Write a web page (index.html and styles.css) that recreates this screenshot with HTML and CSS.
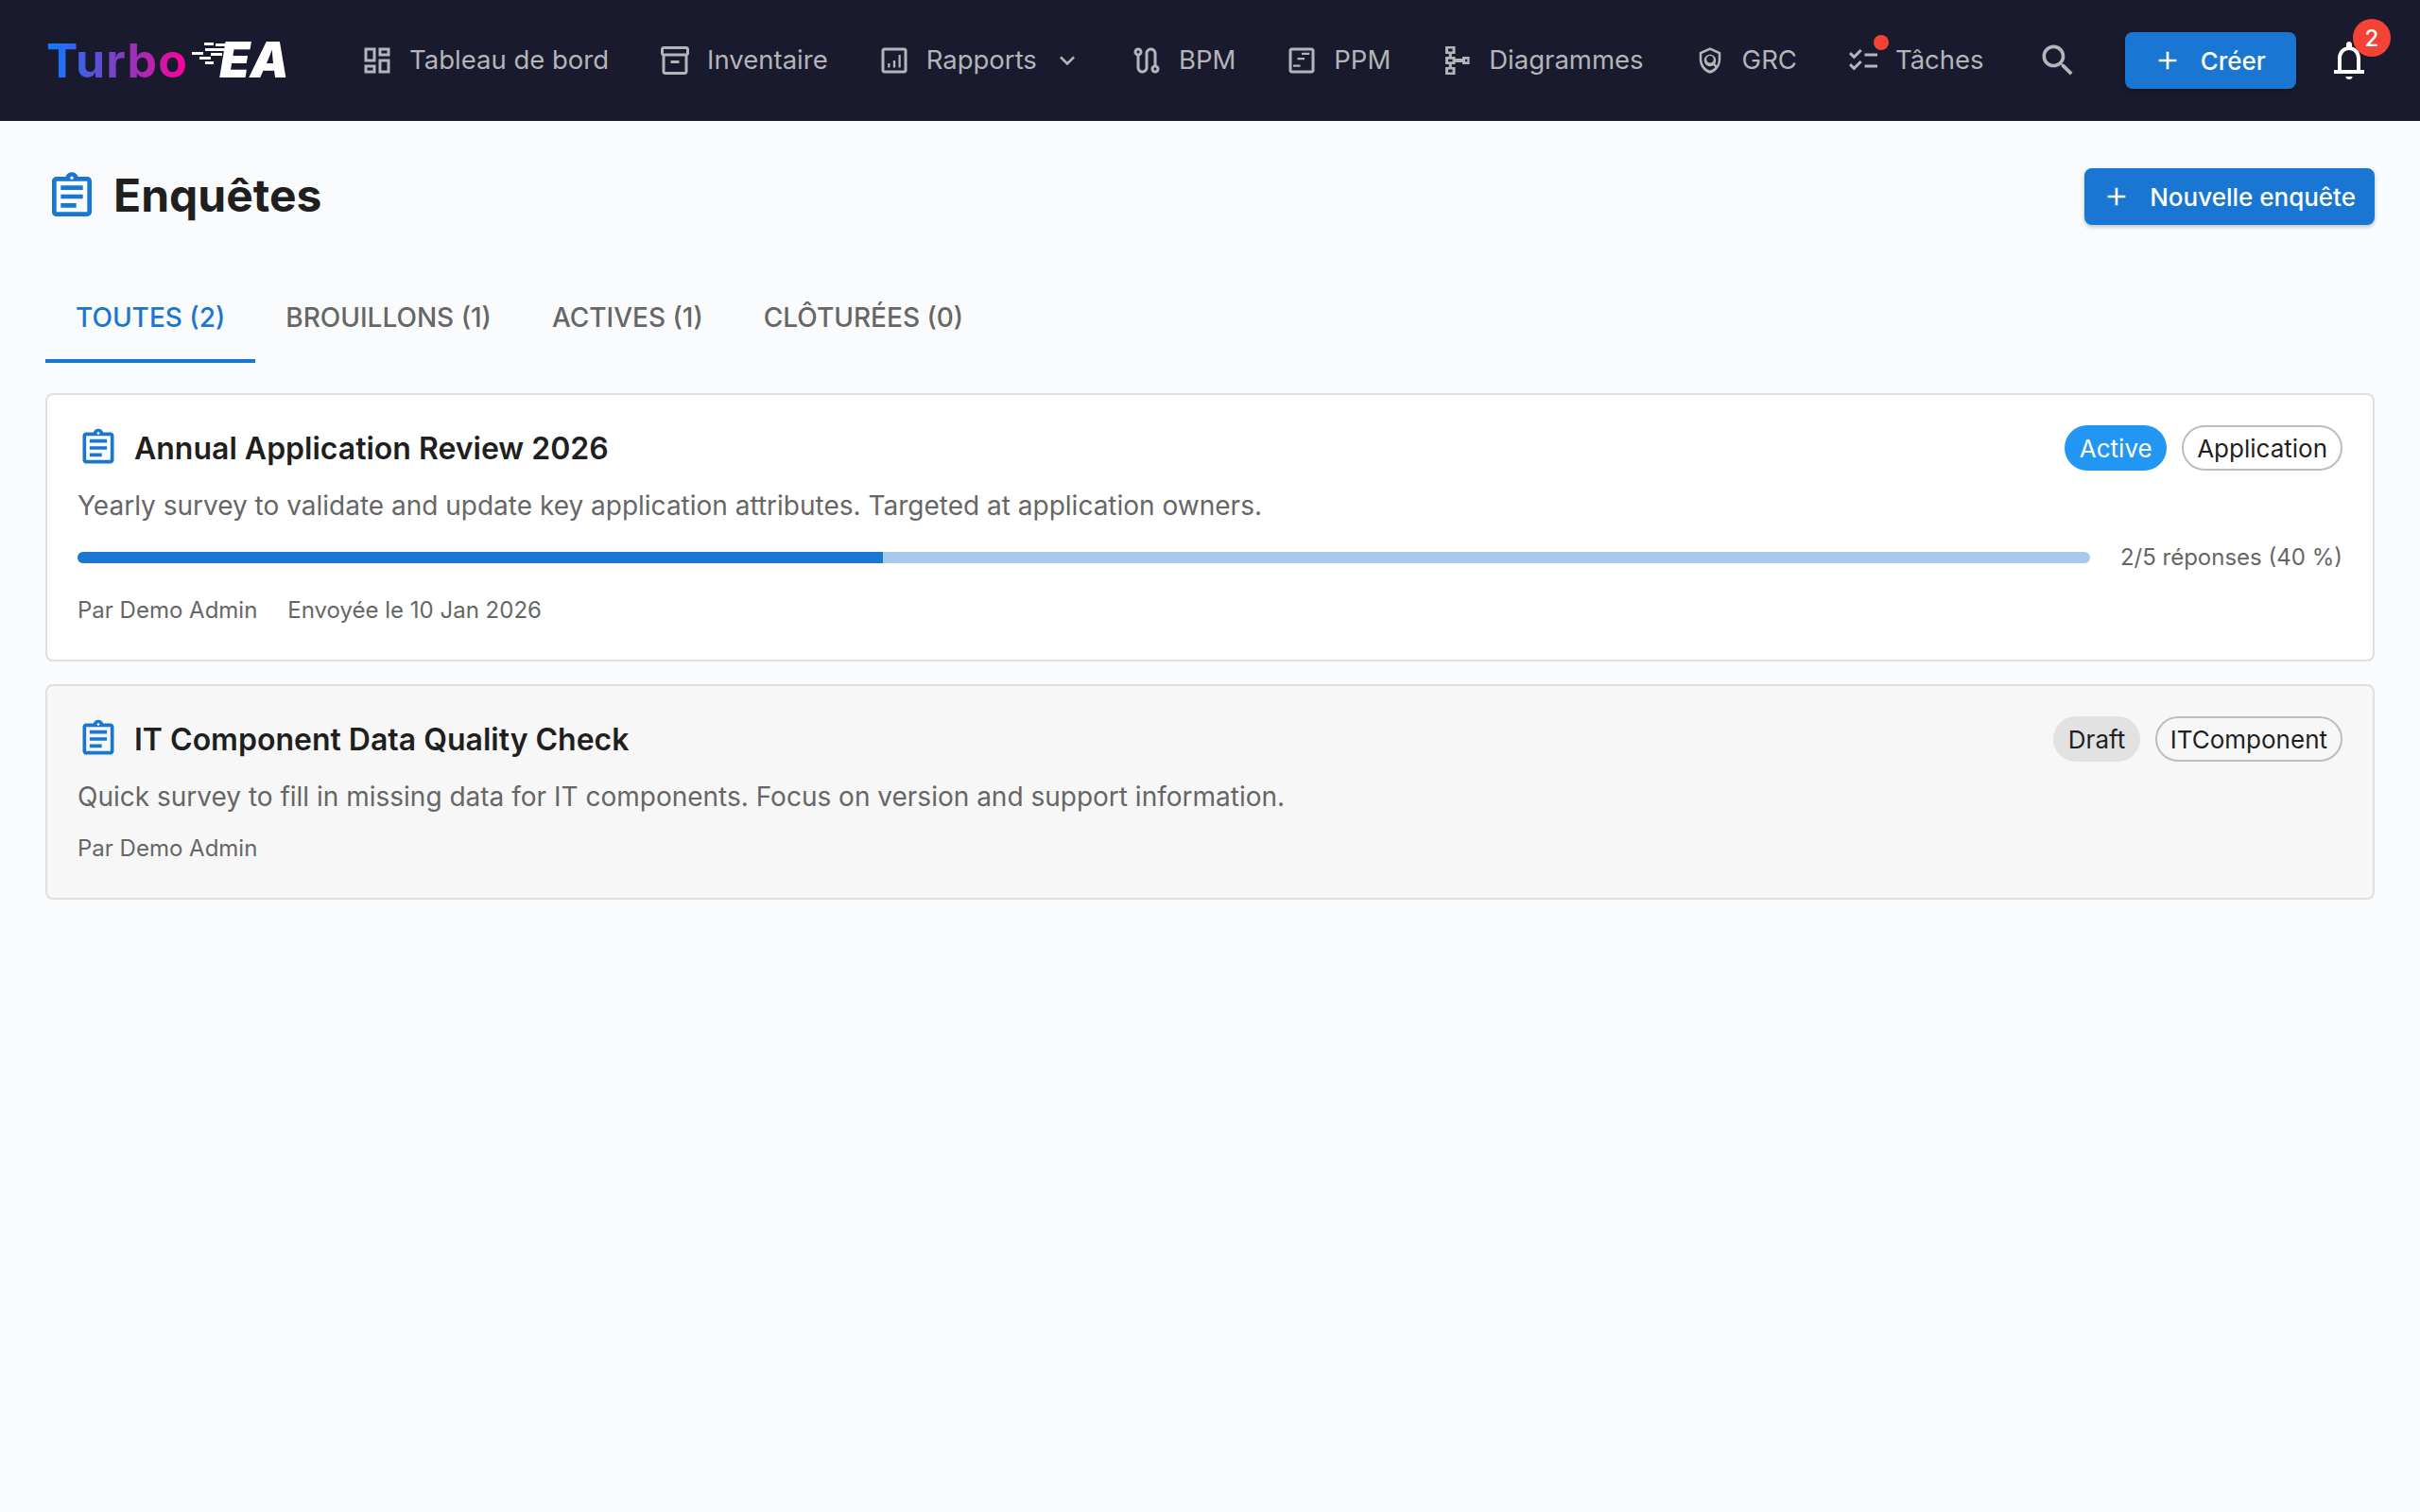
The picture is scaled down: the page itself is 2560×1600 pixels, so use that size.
FILE: index.html
```html
<!DOCTYPE html>
<html lang="fr">
<head>
  <meta charset="UTF-8">
  <title>Enquêtes</title>
  <link rel="stylesheet" href="styles.css">
</head>
<body>
  <header class="topbar">
    <div class="logo">
      <span class="logo-turbo">Turbo</span>
      <svg class="logo-lines" width="36" height="28" viewBox="0 0 36 28" fill="#fff">
        <rect x="13" y="0" width="10" height="3"/>
        <rect x="25" y="1" width="11" height="3"/>
        <rect x="14" y="6" width="22" height="3"/>
        <rect x="0" y="10" width="12" height="3"/>
        <rect x="20" y="11" width="12" height="3"/>
        <rect x="8" y="15" width="12" height="3"/>
        <rect x="14" y="20" width="9" height="3"/>
      </svg>
      <span class="logo-ea">EA</span>
    </div>

    <nav class="nav">
      <a class="nav-item">
        <svg class="nav-icon" viewBox="0 0 24 24"><path d="M19 5v2h-4V5h4M9 5v6H5V5h4m10 8v6h-4v-6h4M9 17v2H5v-2h4M21 3h-8v6h8V3zM11 3H3v10h8V3zm10 8h-8v10h8V11zm-10 4H3v6h8v-6z"/></svg>
        Tableau de bord
      </a>
      <a class="nav-item">
        <svg class="nav-icon" viewBox="0 0 24 24"><path d="M20 2H4c-1 0-2 .9-2 2v3.01c0 .72.43 1.34 1 1.69V20c0 1.1 1.1 2 2 2h14c.9 0 2-.9 2-2V8.7c.57-.35 1-.97 1-1.69V4c0-1.1-1-2-2-2zm-1 18H5V9h14v11zm1-13H4V4h16v3z"/><path d="M9 12h6v2H9z"/></svg>
        Inventaire
      </a>
      <a class="nav-item">
        <svg class="nav-icon" viewBox="0 0 24 24"><path d="M19 3H5c-1.100 0-2 .9-2 2v14c0 1.100.9 2 2 2h14c1.100 0 2-.9 2-2V5c0-1.100-.9-2-2-2zm0 16H5V5h14v14z"/><path d="M7.500 14H9v3H7.500zM11.200 12h1.600v5h-1.600zM15 8h1.500v9H15z"/></svg>
        Rapports
        <svg class="nav-chevron" viewBox="0 0 24 24"><path d="M7.41 8.59 12 13.17l4.59-4.58L18 10l-6 6-6-6z"/></svg>
      </a>
      <a class="nav-item">
        <svg class="nav-icon" viewBox="0 0 24 24"><path d="M19 15.18V7c0-2.21-1.79-4-4-4s-4 1.79-4 4v10c0 1.1-.9 2-2 2s-2-.9-2-2V8.82C8.160 8.400 9 7.300 9 6c0-1.660-1.340-3-3-3S3 4.340 3 6c0 1.300.84 2.400 2 2.820V17c0 2.210 1.790 4 4 4s4-1.790 4-4V7c0-1.100.9-2 2-2s2 .9 2 2v8.180c-1.160.41-2 1.510-2 2.820 0 1.660 1.340 3 3 3s3-1.340 3-3c0-1.300-.84-2.400-2-2.820zM6 7c-.55 0-1-.45-1-1s.45-1 1-1 1 .45 1 1-.45 1-1 1zm12 12c-.55 0-1-.45-1-1s.45-1 1-1 1 .45 1 1-.45 1-1 1z"/></svg>
        BPM
      </a>
      <a class="nav-item">
        <svg class="nav-icon" viewBox="0 0 24 24"><path d="M19 3H5c-1.100 0-2 .9-2 2v14c0 1.100.9 2 2 2h14c1.100 0 2-.9 2-2V5c0-1.100-.9-2-2-2zm0 16H5V5h14v14z"/><path d="M12 6.500h5.500V8H12zM9 10h5v1.500H9zM6 15h5v1.500H6z"/></svg>
        PPM
      </a>
      <a class="nav-item">
        <svg class="nav-icon" viewBox="0 0 24 24"><path fill-rule="evenodd" d="M4 2h7v5.300H8.500v2H11v1.400h5V9.300h5v5.400h-5v-1.400h-5v1.400H8.500v2H11V22H4v-5.300h2.500v-2H4V9.300h2.500v-2H4zM6 3.700v1.900h3V3.700zM6 11.100v1.800h3v-1.800zM6 18.400v1.900h3v-1.900zM18 11.100v1.800h1.500v-1.800z"/></svg>
        Diagrammes
      </a>
      <a class="nav-item">
        <svg class="nav-icon" viewBox="-2.4 -2.4 28.8 28.8"><path d="M12 1 3 5v6c0 5.550 3.840 10.740 9 12 5.160-1.260 9-6.450 9-12V5l-9-4zm7 10c0 1.850-.51 3.650-1.380 5.210l-1.450-1.450c1.290-1.940 1.070-4.580-.64-6.290-.98-.98-2.260-1.470-3.540-1.470s-2.560.49-3.540 1.470c-1.950 1.950-1.950 5.120 0 7.070.98.98 2.260 1.460 3.540 1.460.97 0 1.940-.29 2.770-.84l1.530 1.530c-1.230 1.350-2.730 2.360-4.290 2.700-4.030-1-7-5.550-7-9.390V6.300l7-3.110 7 3.110V11zm-4 0c0 1.660-1.340 3-3 3s-3-1.340-3-3 1.340-3 3-3 3 1.340 3 3z"/></svg>
        GRC
      </a>
      <a class="nav-item">
        <svg class="nav-icon" viewBox="0 0 24 24"><path d="M22 7h-9v2h9V7zm0 8h-9v2h9v-2zM5.540 11 2 7.460l1.410-1.410 2.120 2.120 4.240-4.240 1.410 1.410L5.540 11zm0 8L2 15.460l1.410-1.410 2.120 2.120 4.240-4.240 1.410 1.410L5.540 19z"/></svg>
        <span class="dot"></span>
        Tâches
      </a>
    </nav>

    <svg class="search-icon" viewBox="0 0 24 24"><path d="M15.500 14h-.79l-.28-.27C15.410 12.590 16 11.110 16 9.500 16 5.910 13.090 3 9.500 3S3 5.910 3 9.500 5.910 16 9.500 16c1.610 0 3.090-.59 4.230-1.570l.27.28v.79l5 4.990L20.490 19l-4.990-5zm-6 0C7.010 14 5 11.990 5 9.500S7.010 5 9.500 5 14 7.010 14 9.500 11.990 14 9.500 14z"/></svg>

    <a class="btn btn-create">
      <svg class="btn-icon" viewBox="0 0 24 24"><path d="M19 13h-6v6h-2v-6H5v-2h6V5h2v6h6v2z"/></svg>
      Créer
    </a>

    <div class="bell">
      <svg class="bell-icon" viewBox="0 0 24 24"><path d="M12 22c1 0 1.800-.6 1.800-1.500h-3.600c0 .9.8 1.500 1.800 1.500z"/><path d="M20 17h-2v-6c0-3.100-1.600-5.600-4.500-6.300V3.500C13.500 2.700 12.800 2 12 2s-1.500.7-1.500 1.500v1.200C7.600 5.400 6 7.900 6 11v6H4v2h16v-2zM16 17H8v-6c0-2.500 1.500-4.500 4-4.500s4 2 4 4.500v6z"/></svg>
      <span class="badge">2</span>
    </div>
  </header>

  <main class="page">
    <div class="page-head">
      <div class="page-title">
        <svg class="title-icon" viewBox="0 0 24 24"><path d="M7 15h7v2H7zm0-4h10v2H7zm0-4h10v2H7zm12-4h-4.180C14.400 1.840 13.300 1 12 1c-1.300 0-2.400.84-2.820 2H5c-.14 0-.27.01-.4.04-.39.08-.74.28-1.010.55-.18.18-.33.4-.43.64-.1.23-.16.49-.16.77v14c0 .27.06.54.16.78s.25.45.43.64c.27.27.62.47 1.010.55.13.02.26.03.4.03h14c1.100 0 2-.9 2-2V5c0-1.100-.9-2-2-2zm-7-.25c.41 0 .75.34.75.75s-.34.75-.75.75-.75-.34-.75-.75.34-.75.75-.75zM19 19H5V5h14v14z"/></svg>
        <h1>Enquêtes</h1>
      </div>
      <a class="btn btn-new">
        <svg class="btn-icon" viewBox="0 0 24 24"><path d="M19 13h-6v6h-2v-6H5v-2h6V5h2v6h6v2z"/></svg>
        Nouvelle enquête
      </a>
    </div>

    <div class="tabs">
      <a class="tab active">Toutes (2)</a>
      <a class="tab">Brouillons (1)</a>
      <a class="tab">Actives (1)</a>
      <a class="tab">Clôturées (0)</a>
    </div>

    <section class="card">
      <div class="card-head">
        <svg class="card-icon" viewBox="0 0 24 24"><path d="M7 15h7v2H7zm0-4h10v2H7zm0-4h10v2H7zm12-4h-4.180C14.400 1.840 13.300 1 12 1c-1.300 0-2.400.84-2.820 2H5c-.14 0-.27.01-.4.04-.39.08-.74.28-1.010.55-.18.18-.33.4-.43.64-.1.23-.16.49-.16.77v14c0 .27.06.54.16.78s.25.45.43.64c.27.27.62.47 1.010.55.13.02.26.03.4.03h14c1.100 0 2-.9 2-2V5c0-1.100-.9-2-2-2zm-7-.25c.41 0 .75.34.75.75s-.34.75-.75.75-.75-.34-.75-.75.34-.75.75-.75zM19 19H5V5h14v14z"/></svg>
        <h2>Annual Application Review 2026</h2>
        <span class="chip chip-active">Active</span>
        <span class="chip chip-outline">Application</span>
      </div>
      <p class="desc">Yearly survey to validate and update key application attributes. Targeted at application owners.</p>
      <div class="progress-row">
        <div class="progress"><div class="progress-fill" style="width: 40%"></div></div>
        <span class="progress-label">2/5 réponses (40 %)</span>
      </div>
      <div class="meta">
        <span>Par Demo Admin</span>
        <span>Envoyée le 10 Jan 2026</span>
      </div>
    </section>

    <section class="card card-draft">
      <div class="card-head">
        <svg class="card-icon" viewBox="0 0 24 24"><path d="M7 15h7v2H7zm0-4h10v2H7zm0-4h10v2H7zm12-4h-4.180C14.400 1.840 13.300 1 12 1c-1.300 0-2.400.84-2.820 2H5c-.14 0-.27.01-.4.04-.39.08-.74.28-1.010.55-.18.18-.33.4-.43.64-.1.23-.16.49-.16.77v14c0 .27.06.54.16.78s.25.45.43.64c.27.27.62.47 1.010.55.13.02.26.03.4.03h14c1.100 0 2-.9 2-2V5c0-1.100-.9-2-2-2zm-7-.25c.41 0 .75.34.75.75s-.34.75-.75.75-.75-.34-.75-.75.34-.75.75-.75zM19 19H5V5h14v14z"/></svg>
        <h2>IT Component Data Quality Check</h2>
        <span class="chip chip-draft">Draft</span>
        <span class="chip chip-outline">ITComponent</span>
      </div>
      <p class="desc">Quick survey to fill in missing data for IT components. Focus on version and support information.</p>
      <div class="meta">
        <span>Par Demo Admin</span>
      </div>
    </section>
  </main>
</body>
</html>
```

FILE: styles.css
```css
* {
  box-sizing: border-box;
}

html, body {
  height: 100%;
}

body {
  margin: 0;
  font-family: Inter, "Liberation Sans", sans-serif;
  background: #fafbfd;
  color: #1f1f1f;
}

/* Top bar */
.topbar {
  display: flex;
  align-items: center;
  height: 128px;
  padding: 0 32px 0 48px;
  background: #1a1a2e;
}

.logo {
  display: flex;
  align-items: center;
  width: 312px;
  height: 64px;
  margin-left: 1px;
}

.logo-turbo {
  font-size: 50px;
  font-weight: 700;
  letter-spacing: 1.2px;
  line-height: 64px;
  background: linear-gradient(90deg, #0a7dff, #7d3fc4 50%, #ff0098);
  -webkit-background-clip: text;
  background-clip: text;
  color: transparent;
}

.logo-lines {
  margin: -10px -7px 0 4px;
}

.logo-ea {
  font-size: 52px;
  font-weight: 900;
  font-style: italic;
  line-height: 64px;
  color: #fff;
}

.nav {
  display: flex;
  align-items: center;
  gap: 12px;
  margin-bottom: 3px;
}

.nav-item {
  position: relative;
  display: flex;
  align-items: center;
  padding: 0 20px;
  font-size: 27.5px;
  color: #b4b4ba;
  white-space: nowrap;
}

.nav-icon {
  width: 36px;
  height: 36px;
  margin-top: 3px;
  margin-right: 16px;
  fill: #b4b4ba;
}

.nav-chevron {
  width: 32px;
  height: 32px;
  margin-top: 3px;
  margin-left: 16px;
  margin-right: -2px;
  fill: #b4b4ba;
}

.dot {
  position: absolute;
  top: -6px;
  left: 49px;
  width: 16px;
  height: 16px;
  border-radius: 50%;
  background: #f44336;
}

.search-icon {
  width: 44px;
  height: 44px;
  margin-left: 36px;
  flex-shrink: 0;
  fill: #b4b4ba;
}

.btn {
  display: flex;
  align-items: center;
  height: 60px;
  border-radius: 8px;
  background: #1976d2;
  color: #fff;
  font-size: 26px;
  font-weight: 500;
  white-space: nowrap;
  box-shadow: 0 2px 4px rgba(0, 0, 0, 0.25);
}

.btn-icon {
  width: 32px;
  height: 32px;
  margin-right: 19px;
  fill: #fff;
}

.btn-create {
  margin-left: 49px;
  padding: 0 32px 0 29px;
}

.btn-new {
  padding: 0 20px 0 18px;
}

.bell {
  position: relative;
  width: 48px;
  height: 48px;
  margin-left: 32px;
}

.bell-icon {
  display: block;
  width: 48px;
  height: 48px;
  fill: #fff;
}

.badge {
  position: absolute;
  top: -20px;
  left: 28px;
  display: flex;
  align-items: center;
  justify-content: center;
  width: 40px;
  height: 40px;
  border-radius: 50%;
  background: #f44336;
  color: #fff;
  font-size: 24px;
  font-weight: 500;
}

/* Page */
.page {
  padding: 50px 48px 48px;
}

.page-head {
  display: flex;
  align-items: center;
  justify-content: space-between;
  height: 60px;
  margin-bottom: 50px;
}

.page-title {
  display: flex;
  align-items: center;
  gap: 16px;
}

.page-title h1 {
  margin: 0 0 3px;
  font-size: 48px;
  font-weight: 700;
  color: #1f1f1f;
}

.title-icon {
  width: 56px;
  height: 56px;
  fill: #1976d2;
}

.tabs {
  display: flex;
  height: 96px;
  margin-bottom: 32px;
}

.tab {
  display: flex;
  align-items: center;
  padding: 4px 32px 0;
  font-size: 28px;
  font-weight: 500;
  color: #666;
  text-transform: uppercase;
  border-bottom: 4px solid transparent;
}

.tab.active {
  color: #1976d2;
  border-bottom-color: #1976d2;
}

.card {
  margin-bottom: 24px;
  padding: 32px 32px 34px;
  background: #fff;
  border: 2px solid #e0e0e0;
  border-radius: 8px;
}

.card-draft {
  background: #f7f7f7;
}

.card-head {
  display: flex;
  align-items: center;
  gap: 16px;
  height: 48px;
}

.card-head h2 {
  flex: 1;
  margin: 0;
  font-size: 32px;
  font-weight: 600;
  color: #1f1f1f;
}

.card-icon {
  width: 44px;
  height: 44px;
  fill: #1976d2;
}

.chip {
  display: flex;
  align-items: center;
  height: 48px;
  padding: 0 15.5px;
  border-radius: 24px;
  font-size: 26px;
}

.chip-active {
  background: #2196f3;
  color: #fff;
}

.chip-draft {
  background: #e2e2e2;
  color: #1f1f1f;
}

.chip-outline {
  border: 2px solid #bdbdbd;
  color: #1f1f1f;
  padding: 0 14px;
}

.desc {
  margin: 16px 0 0;
  font-size: 28px;
  line-height: 42px;
  color: #666;
}

.progress-row {
  display: flex;
  align-items: center;
  gap: 32px;
  margin-top: 14px;
}

.progress {
  flex: 1;
  height: 12px;
  border-radius: 6px;
  background: #a6c9ec;
  overflow: hidden;
}

.progress-fill {
  height: 100%;
  background: #1976d2;
}

.progress-label {
  font-size: 24px;
  line-height: 40px;
  color: #666;
}

.meta {
  display: flex;
  gap: 32px;
  margin-top: 18px;
  font-size: 24px;
  line-height: 36px;
  color: #666;
}

.card-draft .meta {
  margin-top: 16px;
}
```
